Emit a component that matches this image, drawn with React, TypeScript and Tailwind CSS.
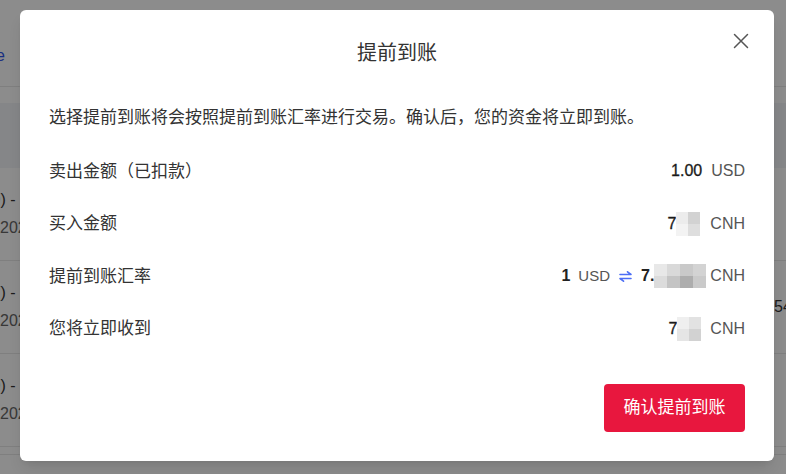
import React from 'react';

const cjk = '[font-family:"Liberation_Sans","Noto_Sans_CJK_SC",sans-serif]';

const Mosaic = ({ cols, cells, w, h }: { cols: string; cells: string[]; w: string; h: string }) => (
  <div className={`grid ${cols}`}>
    {cells.map((c, i) => (
      <div key={i} className={`${w} ${h} ${c}`} />
    ))}
  </div>
);

const SwapIcon = () => (
  <svg width="13" height="11" viewBox="0 0 13 11" fill="none" stroke="#4c6ef5" strokeWidth="1.6" strokeLinecap="round" strokeLinejoin="round">
    <path d="M1 3.5h11L8.5 0.8" />
    <path d="M12 7.5H1l3.5 2.7" />
  </svg>
);

const BgRow = ({ first, date, right }: { first: string; date: string; right?: string }) => (
  <div className="flex h-[93px] items-center border-b border-[#e8e8e8]">
    <div className="flex w-[20px] flex-col items-end gap-[6px] whitespace-nowrap text-[16px] leading-[22px] text-[#333]">
      <div className="flex justify-end">
        <span className="text-[#5b3fa0]">{first}</span>
        <span>) -&nbsp;</span>
      </div>
      <div className="w-[20px] overflow-hidden text-[#666]">{date}</div>
    </div>
    <div className="flex-1" />
    <div className="w-[12px] overflow-visible whitespace-nowrap text-[16px] text-[#333]">{right}</div>
  </div>
);

const Row = ({ label, children }: { label: string; children: React.ReactNode }) => (
  <div className="flex h-[52.5px] items-center justify-between">
    <span className="text-[17px] text-[#333]">{label}</span>
    <div className="flex items-center text-[16px]">{children}</div>
  </div>
);

export default function App() {
  return (
    <div className={`relative h-[474px] w-[786px] overflow-hidden bg-white ${cjk}`}>
      {/* page behind the dialog */}
      <div className="flex h-full flex-col">
        <div className="flex h-[87px] items-end border-b border-[#e8e8e8] pb-[18px]">
          <div className="flex w-[5px] justify-end whitespace-nowrap text-[16px] text-[#2f54eb]">Trade</div>
        </div>
        <div className="mt-[16px] h-[65px] bg-[#f3f4f7]" />
        <BgRow first="(USD" date="2024-03-15" />
        <BgRow first="民币 (" date="2024-03-14" right="54" />
        <BgRow first="(USD" date="2024-03-12" />
        <div className="h-[8px] border-b border-[#e8e8e8]" />
      </div>

      {/* overlay + dialog */}
      <div className="absolute inset-0 bg-black/45 pl-[20px] pr-[12px] pt-[10px]">
        <div className="relative flex h-[451px] flex-col rounded-[6px] bg-white px-[29px] pt-[29px] shadow-lg">
          <h2 className="text-center text-[20px] leading-[28px] text-[#333]">提前到账</h2>
          <button className="absolute right-[25px] top-[23px] flex h-[16px] w-[16px] items-center justify-center">
            <svg width="16" height="16" viewBox="0 0 16 16" stroke="#555" strokeWidth="1.5" strokeLinecap="round">
              <path d="M1.5 1.5l13 13M14.5 1.5l-13 13" />
            </svg>
          </button>

          <p className="mt-[39px] text-[17px] leading-[24px] text-[#333]">
            选择提前到账将会按照提前到账汇率进行交易。确认后，您的资金将立即到账。
          </p>

          <div className="mt-[15px] flex flex-col">
            <Row label="卖出金额（已扣款）">
              <span className="text-[#1a1a1a] [-webkit-text-stroke:0.3px_#1a1a1a]">1.00</span>
              <span className="ml-[9px] text-[#555]">USD</span>
            </Row>
            <Row label="买入金额">
              <span className="text-[#1a1a1a] [-webkit-text-stroke:0.3px_#1a1a1a]">7</span>
              <Mosaic cols="grid-cols-2" w="w-[12px]" h="h-[12px]" cells={['bg-[#ececec]', 'bg-[#d2d2d2]', 'bg-[#f3f3f3]', 'bg-[#dedede]']} />
              <span className="ml-[10px] text-[#555]">CNH</span>
            </Row>
            <Row label="提前到账汇率">
              <span className="font-bold text-[#222]">1</span>
              <span className="ml-[8px] text-[15px] text-[#555]">USD</span>
              <span className="mx-[9px] flex items-center"><SwapIcon /></span>
              <span className="font-bold text-[#222]">7.</span>
              <Mosaic
                cols="grid-cols-4"
                w="w-[13px]"
                h="h-[12px]"
                cells={['bg-[#e8e8e8]', 'bg-[#d9d9d9]', 'bg-[#c9c9c9]', 'bg-[#d3d3d3]', 'bg-[#dcdcdc]', 'bg-[#c4c4c4]', 'bg-[#adadad]', 'bg-[#cacaca]']}
              />
              <span className="ml-[4px] text-[#555]">CNH</span>
            </Row>
            <Row label="您将立即收到">
              <span className="text-[#1a1a1a] [-webkit-text-stroke:0.3px_#1a1a1a]">7</span>
              <Mosaic cols="grid-cols-2" w="w-[12px]" h="h-[12px]" cells={['bg-[#efefef]', 'bg-[#e2e2e2]', 'bg-[#e5e5e5]', 'bg-[#d2d2d2]']} />
              <span className="ml-[9px] text-[#555]">CNH</span>
            </Row>
          </div>

          <div className="mt-[29px] flex justify-end">
            <button className="h-[48px] w-[141px] rounded-[4px] bg-[#e8173e] text-[17px] text-white">确认提前到账</button>
          </div>
        </div>
      </div>
    </div>
  );
}
